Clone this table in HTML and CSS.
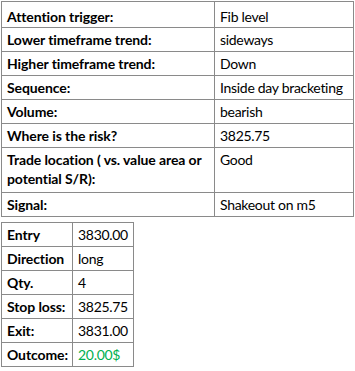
FILE: index.html
```html
<!DOCTYPE html>
<html>
<head>
<meta charset="utf-8">
<link rel="stylesheet" href="styles.css">
</head>
<body>
<div class="page">
  <table class="grid plan">
    <colgroup><col class="plan-key"><col class="plan-val"></colgroup>
    <tr class="first"><td class="key">Attention trigger:</td><td class="val">Fib level</td></tr>
    <tr><td class="key">Lower timeframe trend:</td><td class="val">sideways</td></tr>
    <tr><td class="key">Higher timeframe trend:</td><td class="val">Down</td></tr>
    <tr><td class="key">Sequence:</td><td class="val">Inside day bracketing</td></tr>
    <tr><td class="key">Volume:</td><td class="val">bearish</td></tr>
    <tr><td class="key">Where is the risk?</td><td class="val">3825.75</td></tr>
    <tr class="tall"><td class="key">Trade location ( vs. value area or potential S/R):</td><td class="val">Good</td></tr>
    <tr><td class="key">Signal:</td><td class="val">Shakeout on m5</td></tr>
  </table>
  <table class="grid trade">
    <colgroup><col class="trade-key"><col class="trade-val"></colgroup>
    <tr><td class="key">Entry</td><td class="val">3830.00</td></tr>
    <tr><td class="key">Direction</td><td class="val">long</td></tr>
    <tr><td class="key">Qty.</td><td class="val">4</td></tr>
    <tr><td class="key">Stop loss:</td><td class="val">3825.75</td></tr>
    <tr><td class="key">Exit:</td><td class="val">3831.00</td></tr>
    <tr><td class="key">Outcome:</td><td class="val win">20.00$</td></tr>
  </table>
</div>
</body>
</html>
```

FILE: styles.css
```css
html, body {
  margin: 0;
  padding: 0;
  background: #ffffff;
}

.page {
  display: flex;
  flex-direction: column;
  align-items: flex-start;
  gap: 5px;
  padding: 1px 0 0 1px;
  font-family: Lato, "Open Sans", "Liberation Sans", sans-serif;
  font-size: 14px;
  color: #000000;
}

.grid {
  border-collapse: collapse;
  table-layout: fixed;
}

.grid td {
  border: 1px solid #8a8a8a;
  padding: 2px 3px 2px 5px;
  line-height: 19px;
  vertical-align: top;
  text-align: left;
  white-space: nowrap;
}

.grid .key {
  font-weight: bold;
  letter-spacing: -0.1px;
}

.grid .tall .key {
  white-space: normal;
}

.grid .val {
  letter-spacing: -0.3px;
}

.plan {
  width: 352px;
}

.plan-key {
  width: 213px;
}

.plan-val {
  width: 139px;
}

.plan .first td {
  padding-top: 5px;
  padding-bottom: 1px;
}

.plan .tall td {
  padding-bottom: 4px;
}

.trade {
  width: 132px;
}

.trade-key {
  width: 71px;
}

.trade-val {
  width: 61px;
}

.win {
  color: #00b050;
}
```
